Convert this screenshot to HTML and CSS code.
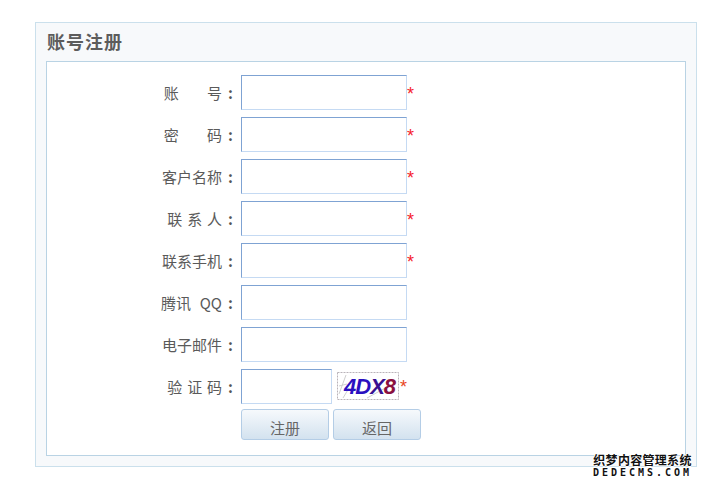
FILE: index.html
```html
<!DOCTYPE html>
<html lang="zh">
<head>
<meta charset="utf-8">
<title>账号注册</title>
<link rel="stylesheet" href="styles.css">
</head>
<body>
<main class="panel">
  <h1 class="panel-title">账号注册</h1>
  <form class="form-box">
    <div class="row"><label class="label gap-wide">账 号</label><span class="colon">:</span><input class="input"><span class="star">*</span></div>
    <div class="row"><label class="label gap-wide">密 码</label><span class="colon">:</span><input class="input"><span class="star">*</span></div>
    <div class="row"><label class="label">客户名称</label><span class="colon">:</span><input class="input"><span class="star">*</span></div>
    <div class="row"><label class="label gap-mid">联 系 人</label><span class="colon">:</span><input class="input"><span class="star">*</span></div>
    <div class="row"><label class="label">联系手机</label><span class="colon">:</span><input class="input"><span class="star">*</span></div>
    <div class="row"><label class="label gap-qq">腾讯 &nbsp;QQ</label><span class="colon">:</span><input class="input"></div>
    <div class="row"><label class="label">电子邮件</label><span class="colon">:</span><input class="input"></div>
    <div class="row"><label class="label gap-mid">验 证 码</label><span class="colon">:</span><input class="input input-short">
      <svg class="captcha" width="62" height="28" viewBox="0 0 62 28">
        <rect x="0.5" y="0.5" width="61" height="27" fill="#fff" stroke="#b9b3b9" stroke-dasharray="2 1"/>
        <path d="M2 22 L9 3 M6 26 L12 16 M30 26 L52 14 M2 14 L10 12" stroke="#cfcfcf" fill="none"/>
        <text x="7" y="22" class="captcha-text"><tspan fill="#2a10c0">4D</tspan><tspan fill="#3a1090">X</tspan><tspan fill="#8a1040">8</tspan></text>
      </svg><span class="star star-captcha">*</span></div>
    <div class="actions">
      <button type="button" class="btn">注册</button>
      <button type="button" class="btn">返回</button>
    </div>
  </form>
</main>
<aside class="watermark"><div class="wm-cn">织梦内容管理系统</div><div class="wm-en">DEDECMS.COM</div></aside>
</body>
</html>
```

FILE: styles.css
```css
* { box-sizing: border-box; }
html, body { margin: 0; padding: 0; background: #fff; }
body {
  width: 702px;
  height: 487px;
  overflow: hidden;
  padding: 22px 5px 0 35px;
  font-family: "Noto Sans CJK SC", "Liberation Sans", sans-serif;
  color: #555;
  position: relative;
}
.panel {
  width: 662px;
  height: 445px;
  background: #f7f9fb;
  border: 1px solid #cbe0ec;
  padding: 0 10px 10px;
  display: flex;
  flex-direction: column;
}
.panel-title {
  margin: 0;
  padding-left: 1px;
  height: 38px;
  line-height: 37px;
  font-size: 18px;
  font-weight: 700;
  letter-spacing: 1px;
  color: #5c5c5c;
}
.form-box {
  flex: 1;
  background: #fff;
  border: 1px solid #b9d3e4;
  padding: 13px 0 0;
  display: flex;
  flex-direction: column;
  gap: 7px;
}
.row {
  display: flex;
  align-items: center;
  height: 35px;
}
.label {
  width: 175px;
  text-align: right;
  font-size: 15px;
  line-height: 35px;
  color: #5a5a5a;
  white-space: nowrap;
}
.gap-wide { word-spacing: 25px; }
.gap-mid { word-spacing: 1.5px; }
.gap-qq { word-spacing: 1px; }
.colon {
  width: 19px;
  padding: 0 0 0 6px;
  font-size: 15px;
  font-weight: 700;
  color: #555;
}
.input {
  width: 166px;
  height: 35px;
  margin: 0;
  padding: 0;
  background: #fff;
  border: 1px solid #c5daf3;
  border-top-color: #7fa3d3;
  border-left-color: #7fa3d3;
  outline: none;
}
.input-short { width: 91px; }
.star {
  color: #f5222d;
  font-family: "Liberation Sans", sans-serif;
  font-size: 18px;
  line-height: 18px;
  margin-top: 3px;
}
.star-captcha { color: #e8451c; margin-left: 1px; margin-top: 1px; }
.captcha { display: block; margin-left: 5px; margin-top: -1px; flex: none; }
.captcha-text {
  font-family: "Liberation Sans", sans-serif;
  font-size: 22px;
  font-weight: 700;
  font-style: italic;
  letter-spacing: -1px;
}
.actions {
  display: flex;
  gap: 4px;
  margin: -2px 0 0 194px;
}
.btn {
  width: 88px;
  height: 31px;
  margin: 0;
  padding: 7px 0 0;
  font-family: inherit;
  font-size: 15px;
  line-height: 22px;
  color: #666;
  border: 1px solid #b4cde6;
  border-radius: 3px;
  background: linear-gradient(#f6f9fc, #d3e2ef);
}
.watermark {
  position: absolute;
  left: 592px;
  top: 452px;
  width: 101px;
  text-align: center;
  color: #111;
  text-shadow: 1px 0 #fff, -1px 0 #fff, 0 1px #fff, 0 -1px #fff;
}
.wm-cn { font-size: 12px; line-height: 15px; font-weight: 700; letter-spacing: .3px; white-space: nowrap; }
.wm-en { font-family: "DejaVu Sans Mono", monospace; font-size: 10px; line-height: 12px; font-weight: 700; letter-spacing: 3px; white-space: nowrap; }
```
